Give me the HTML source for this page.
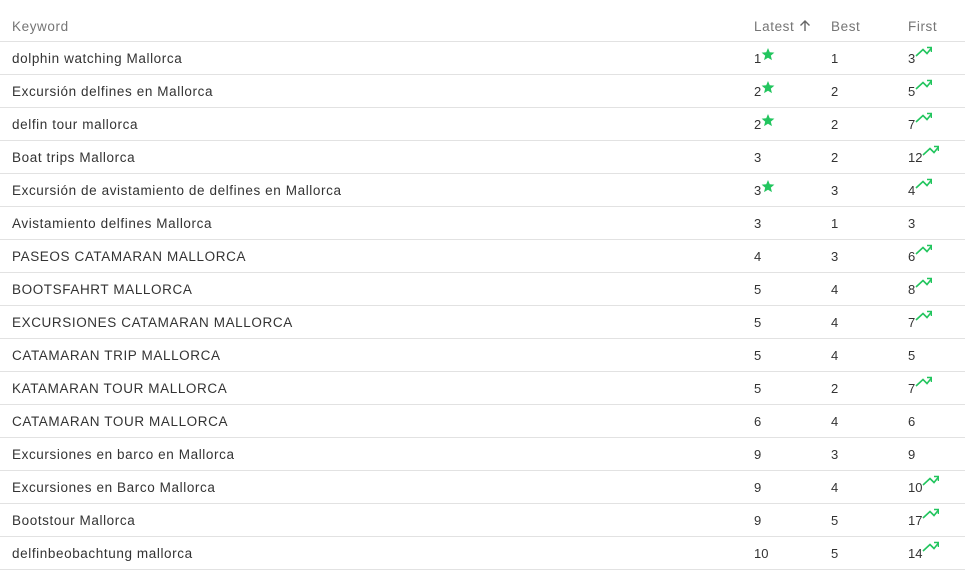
<!DOCTYPE html>
<html><head><meta charset="utf-8"><style>
body{margin:0;background:#fff;font-family:"Liberation Sans",sans-serif;color:#333;font-size:13.5px;letter-spacing:0.6px}
.t{position:absolute;left:0;top:0;width:965px}
.r{position:relative;height:33px;border-bottom:1px solid #e2e2e2;box-sizing:border-box}
.h{height:42px;color:#757575}
.c{position:absolute;top:0;line-height:33px;white-space:nowrap}
.h .c{top:10px}
.k{left:12px}.l{left:754px}.b{left:831px}.f{left:908px}
.r:not(.h) .l,.r:not(.h) .b,.r:not(.h) .f{letter-spacing:0;font-size:13px}
.s{vertical-align:2px}
.g{vertical-align:6px}
</style></head><body><div class="t">
<div class="r h"><span class="c k">Keyword</span><span class="c l">Latest <svg width="12" height="13" viewBox="0 0 12 13" style="vertical-align:-1px"><path d="M6 12V2M1.5 6.5L6 2l4.5 4.5" stroke="#666" stroke-width="1.4" fill="none"/></svg></span><span class="c b">Best</span><span class="c f">First</span></div>
</div>
<script>
const rows=[["dolphin watching Mallorca","1",1,"1","3",1],["Excursión delfines en Mallorca","2",1,"2","5",1],["delfin tour mallorca","2",1,"2","7",1],["Boat trips Mallorca","3",0,"2","12",1],["Excursión de avistamiento de delfines en Mallorca","3",1,"3","4",1],["Avistamiento delfines Mallorca","3",0,"1","3",0],["PASEOS CATAMARAN MALLORCA","4",0,"3","6",1],["BOOTSFAHRT MALLORCA","5",0,"4","8",1],["EXCURSIONES CATAMARAN MALLORCA","5",0,"4","7",1],["CATAMARAN TRIP MALLORCA","5",0,"4","5",0],["KATAMARAN TOUR MALLORCA","5",0,"2","7",1],["CATAMARAN TOUR MALLORCA","6",0,"4","6",0],["Excursiones en barco en Mallorca","9",0,"3","9",0],["Excursiones en Barco Mallorca","9",0,"4","10",1],["Bootstour Mallorca","9",0,"5","17",1],["delfinbeobachtung mallorca","10",0,"5","14",1]];
const star='<svg class="s" width="14" height="13" viewBox="0 0 24 23"><path fill="#22c55e" d="M12 0l3.1 7.6 8.2.6-6.3 5.3 2 8L12 17.3 5 21.5l2-8L.7 8.2l8.2-.6z"/></svg>';
const tr='<svg class="g" width="17" height="11" viewBox="0 0 17 11"><path d="M1 10l7-6.5 4 4L16.5 2M12 1.5h4.5V6" stroke="#22c55e" stroke-width="1.6" fill="none"/></svg>';
let h='';
for(const r of rows){
 h+=`<div class="r"><span class="c k">${r[0]}</span><span class="c l">${r[1]}${r[2]?star:''}</span><span class="c b">${r[3]}</span><span class="c f">${r[4]}${r[5]?tr:''}</span></div>`;
}
document.querySelector('.t').insertAdjacentHTML('beforeend',h);
</script>
</body></html>
